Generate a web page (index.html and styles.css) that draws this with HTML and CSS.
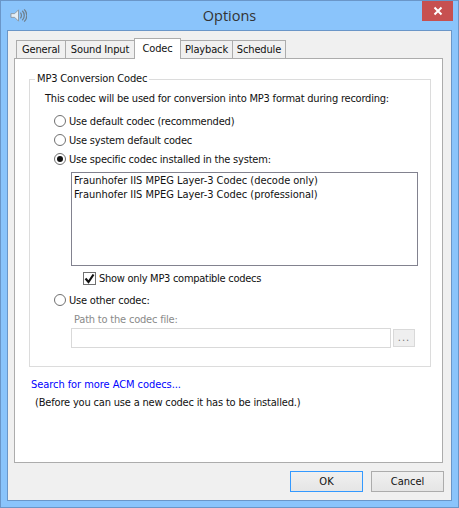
FILE: index.html
```html
<!DOCTYPE html>
<html>
<head>
<meta charset="utf-8">
<title>Options</title>
<link rel="stylesheet" href="styles.css">
</head>
<body>
<div class="window">
  <div class="titlebar">
    <svg class="app-icon" width="17" height="17" viewBox="0 0 18 18">
      <path d="M1 7h4l4-4v12l-4-4H1z" fill="#e6eef5" stroke="#8a97a3"/>
      <path d="M11 6c1.500 1.500 1.500 4.500 0 6M13 4c2.800 2.800 2.800 7.200 0 10M15 2.500c3.800 3.800 3.800 9.200 0 13" fill="none" stroke="#6f7f8c" stroke-width="1.300"/>
    </svg>
    <div class="title">Options</div>
    <div class="close"><svg width="10" height="10" viewBox="0 0 10 10"><path d="M1.500 1.500l7 7M8.500 1.500l-7 7" stroke="#fff" stroke-width="2"/></svg></div>
  </div>
  <div class="client">
    <div class="tabs">
      <div class="tab tab-general">General</div>
      <div class="tab tab-sound">Sound Input</div>
      <div class="tab tab-codec active">Codec</div>
      <div class="tab tab-playback">Playback</div>
      <div class="tab tab-schedule">Schedule</div>
    </div>
    <div class="panel">
      <fieldset class="group">
        <legend>MP3 Conversion Codec</legend>
        <p class="intro">This codec will be used for conversion into MP3 format during recording:</p>
        <div class="radios">
          <div class="radio-row"><span class="radio"></span>Use default codec (recommended)</div>
          <div class="radio-row"><span class="radio"></span>Use system default codec</div>
          <div class="radio-row"><span class="radio on"></span>Use specific codec installed in the system:</div>
        </div>
        <div class="listbox">
          <div>Fraunhofer IIS MPEG Layer-3 Codec (decode only)</div>
          <div>Fraunhofer IIS MPEG Layer-3 Codec (professional)</div>
        </div>
        <div class="check-row">
          <span class="check"><svg width="11" height="11" viewBox="0 0 11 11"><path d="M1.500 5.500l3 3.500 5-7.500" fill="none" stroke="#111" stroke-width="2.200"/></svg></span>
          Show only MP3 compatible codecs
        </div>
        <div class="radio-row other"><span class="radio"></span>Use other codec:</div>
        <div class="path-label">Path to the codec file:</div>
        <div class="path-row">
          <div class="path-input"></div>
          <div class="browse">...</div>
        </div>
      </fieldset>
      <a class="link">Search for more ACM codecs...</a>
      <p class="note">(Before you can use a new codec it has to be installed.)</p>
    </div>
    <div class="buttons">
      <div class="btn default">OK</div>
      <div class="btn">Cancel</div>
    </div>
  </div>
</div>
</body>
</html>
```
FILE: styles.css
```css
* { box-sizing: border-box; }
html, body { margin: 0; padding: 0; }
body { width: 459px; height: 508px; overflow: hidden; font-family: "DejaVu Sans Condensed", "DejaVu Sans", sans-serif; font-size: 11px; color: #111; }
.window { width: 459px; height: 508px; background: #8ac4fb; border: 1px solid #6a96c8; padding: 0 6px 6px; display: flex; flex-direction: column; }
.titlebar { height: 29px; flex: none; display: flex; align-items: center; justify-content: center; position: relative; }
.app-icon { position: absolute; left: 3px; top: 6px; }
.title { font-family: "Open Sans", sans-serif; font-size: 14.5px; color: #333; margin-top: -1px; }
.close { position: absolute; right: -1px; top: 0; width: 31px; height: 20px; background: #c75050; display: flex; align-items: center; justify-content: center; }
.client { flex: 1; background: #f0f0f0; border: 1px solid #6a96c8; padding: 7px 7px 8px 6px; display: flex; flex-direction: column; }
.tabs { display: flex; height: 20px; padding-left: 2px; align-items: flex-end; position: relative; z-index: 1; flex: none; letter-spacing: -0.15px; }
.tab { height: 18px; margin-right: -1px; border: 1px solid #acacac; border-bottom: none; background: #f0f0f0; line-height: 17px; white-space: nowrap; text-align: center; }
.tab-general { width: 50px; }
.tab-sound { width: 70px; }
.tab-codec { width: 47px; }
.tab-playback { width: 53px; }
.tab-schedule { width: 54px; }
.tab.active { height: 21px; background: #fff; position: relative; line-height: 19px; margin-bottom: -1px; }
.panel { height: 405px; background: #fff; border: 1px solid #acacac; margin-right: 1px; padding: 13px 11px 0 14px; flex: none; }
.group { margin: 0; height: 295px; border: 1px solid #dcdcdc; padding: 0 0 0 15px; min-width: 0; }
.group legend { padding: 0 2px; margin-left: -10px; line-height: 14px; letter-spacing: -0.15px; }
.intro { margin: 6px 0 0; line-height: 14px; letter-spacing: -0.21px; }
.radios { margin: 8px 0 0 9px; display: flex; flex-direction: column; gap: 5px; letter-spacing: -0.2px; }
.radio-row { display: flex; align-items: center; height: 14px; }
.radio { width: 12px; height: 12px; border: 1px solid #707070; border-radius: 50%; background: #fff; margin-right: 3px; flex: none; display: flex; align-items: center; justify-content: center; }
.radio.on::after { content: ""; width: 6px; height: 6px; border-radius: 50%; background: #111; }
.listbox { margin: 6px 0 0 26px; width: 347px; height: 94px; border: 1px solid #82828f; padding: 1px 2px; line-height: 14px; letter-spacing: -0.03px; }
.check-row { margin: 5px 0 0 38px; display: flex; align-items: center; gap: 3px; height: 14px; letter-spacing: -0.28px; }
.check { width: 13px; height: 13px; border: 1px solid #707070; background: #fff; display: flex; align-items: center; justify-content: center; flex: none; }
.other { margin: 8px 0 0 9px; letter-spacing: -0.2px; }
.path-label { margin: 6px 0 0 29px; color: #8a8a8a; line-height: 14px; letter-spacing: -0.2px; }
.path-row { margin: 1px 0 0 26px; display: flex; align-items: center; gap: 2px; }
.path-input { width: 320px; height: 20px; border: 1px solid #d9d9d9; background: #fff; }
.browse { width: 22px; height: 18px; border: 1px solid #d9d9d9; background: #efefef; color: #777; text-align: center; line-height: 16px; letter-spacing: 1px; }
.link { display: block; margin-top: 11px; margin-left: 2px; color: #0000ff; line-height: 14px; letter-spacing: -0.06px; }
.note { margin: 4px 0 0 6px; line-height: 14px; letter-spacing: -0.18px; }
.buttons { margin-top: 8px; display: flex; justify-content: flex-end; gap: 8px; flex: none; }
.btn { width: 73px; height: 21px; border: 1px solid #acacac; background: linear-gradient(#f0f0f0, #e5e5e5); text-align: center; line-height: 19px; }
.btn.default { border: 1px solid #3399ff; }
```
